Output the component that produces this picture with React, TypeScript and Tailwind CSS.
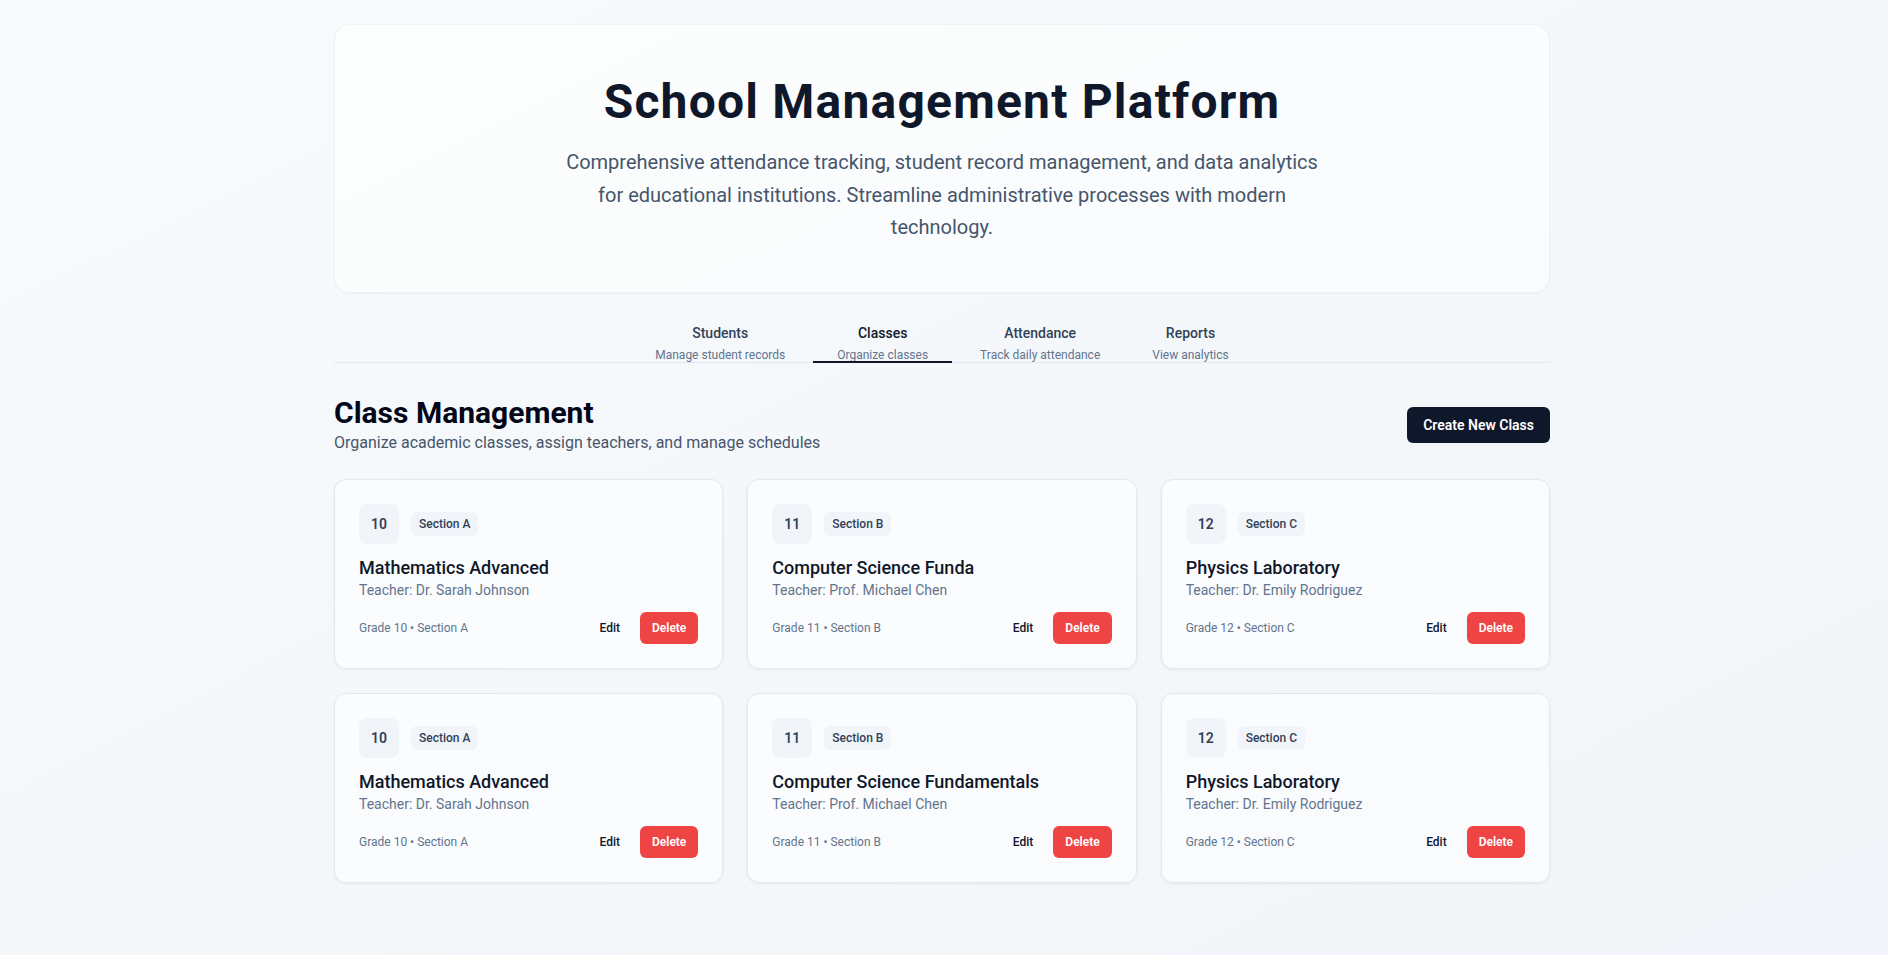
import React from "react";

type ClassItem = {
  grade: string;
  section: string;
  name: string;
  teacher: string;
};

const classes: ClassItem[] = [
  { grade: "10", section: "Section A", name: "Mathematics Advanced", teacher: "Dr. Sarah Johnson" },
  { grade: "11", section: "Section B", name: "Computer Science Funda", teacher: "Prof. Michael Chen" },
  { grade: "12", section: "Section C", name: "Physics Laboratory", teacher: "Dr. Emily Rodriguez" },
  { grade: "10", section: "Section A", name: "Mathematics Advanced", teacher: "Dr. Sarah Johnson" },
  { grade: "11", section: "Section B", name: "Computer Science Fundamentals", teacher: "Prof. Michael Chen" },
  { grade: "12", section: "Section C", name: "Physics Laboratory", teacher: "Dr. Emily Rodriguez" },
];

const tabs = [
  { label: "Students", sub: "Manage student records", active: false },
  { label: "Classes", sub: "Organize classes", active: true },
  { label: "Attendance", sub: "Track daily attendance", active: false },
  { label: "Reports", sub: "View analytics", active: false },
];

function ClassCard({ c }: { c: ClassItem }) {
  return (
    <div className="rounded-xl border border-slate-200 bg-white/60 p-6 shadow-[0_1px_3px_rgba(15,23,42,0.06)]">
      <div className="flex h-10 items-center gap-3">
        <div className="flex h-10 w-10 items-center justify-center rounded-lg bg-slate-100 text-sm font-semibold text-slate-700">
          {c.grade}
        </div>
        <span className="rounded-md bg-slate-100 px-2 py-1 text-xs font-medium leading-4 text-slate-700">
          {c.section}
        </span>
      </div>
      <h3 className="mt-3 text-lg font-medium leading-6 text-slate-900">{c.name}</h3>
      <p className="text-sm leading-5 text-slate-500">Teacher: {c.teacher}</p>
      <div className="mt-3 flex items-center justify-between">
        <span className="text-xs text-slate-500">
          Grade {c.grade} • {c.section}
        </span>
        <div className="flex items-center gap-2">
          <button className="h-8 rounded-md px-3 text-xs font-medium text-slate-900">Edit</button>
          <button className="h-8 rounded-md bg-[#ef4444] px-3 text-xs font-semibold text-white">Delete</button>
        </div>
      </div>
    </div>
  );
}

export default function App() {
  return (
    <div className="min-h-screen bg-gradient-to-br from-slate-50 to-slate-100 font-['Roboto',_'Noto_Sans',_sans-serif]">
      <div className="mx-auto max-w-7xl pb-12 pl-[30px] pr-[34px] pt-6">
        <div className="rounded-2xl border border-slate-200/50 bg-white/60 px-8 pb-12 pt-[47px] text-center shadow-[0_1px_2px_rgba(15,23,42,0.04)]">
          <h1 className="mb-[14px] text-5xl font-bold leading-tight tracking-wide text-slate-900">
            School Management Platform
          </h1>
          <p className="mx-auto max-w-3xl text-xl leading-relaxed text-slate-600">
            Comprehensive attendance tracking, student record management, and data analytics for educational
            institutions. Streamline administrative processes with modern technology.
          </p>
        </div>

        <div className="mt-[30px] flex justify-center gap-1 border-b border-slate-200">
          {tabs.map((t) => (
            <button key={t.label} className="relative flex flex-col items-center px-6">
              <span
                className={
                  t.active
                    ? "text-sm font-medium leading-5 text-slate-900"
                    : "text-sm font-medium leading-5 text-slate-700"
                }
              >
                {t.label}
              </span>
              <span className="-mb-px mt-1 text-xs leading-4 text-slate-500">{t.sub}</span>
              {t.active && <span className="absolute -bottom-px left-0 right-0 h-0.5 bg-slate-900" />}
            </button>
          ))}
        </div>

        <div className="mb-6 mt-8 flex items-center justify-between">
          <div>
            <h2 className="text-3xl font-bold leading-9 text-slate-950">Class Management</h2>
            <p className="text-base leading-6 text-slate-600">
              Organize academic classes, assign teachers, and manage schedules
            </p>
          </div>
          <button className="h-9 rounded-md bg-slate-900 px-4 text-sm font-semibold text-white">
            Create New Class
          </button>
        </div>

        <div className="grid grid-cols-3 gap-6">
          {classes.map((c, i) => (
            <ClassCard key={i} c={c} />
          ))}
        </div>
      </div>
    </div>
  );
}
